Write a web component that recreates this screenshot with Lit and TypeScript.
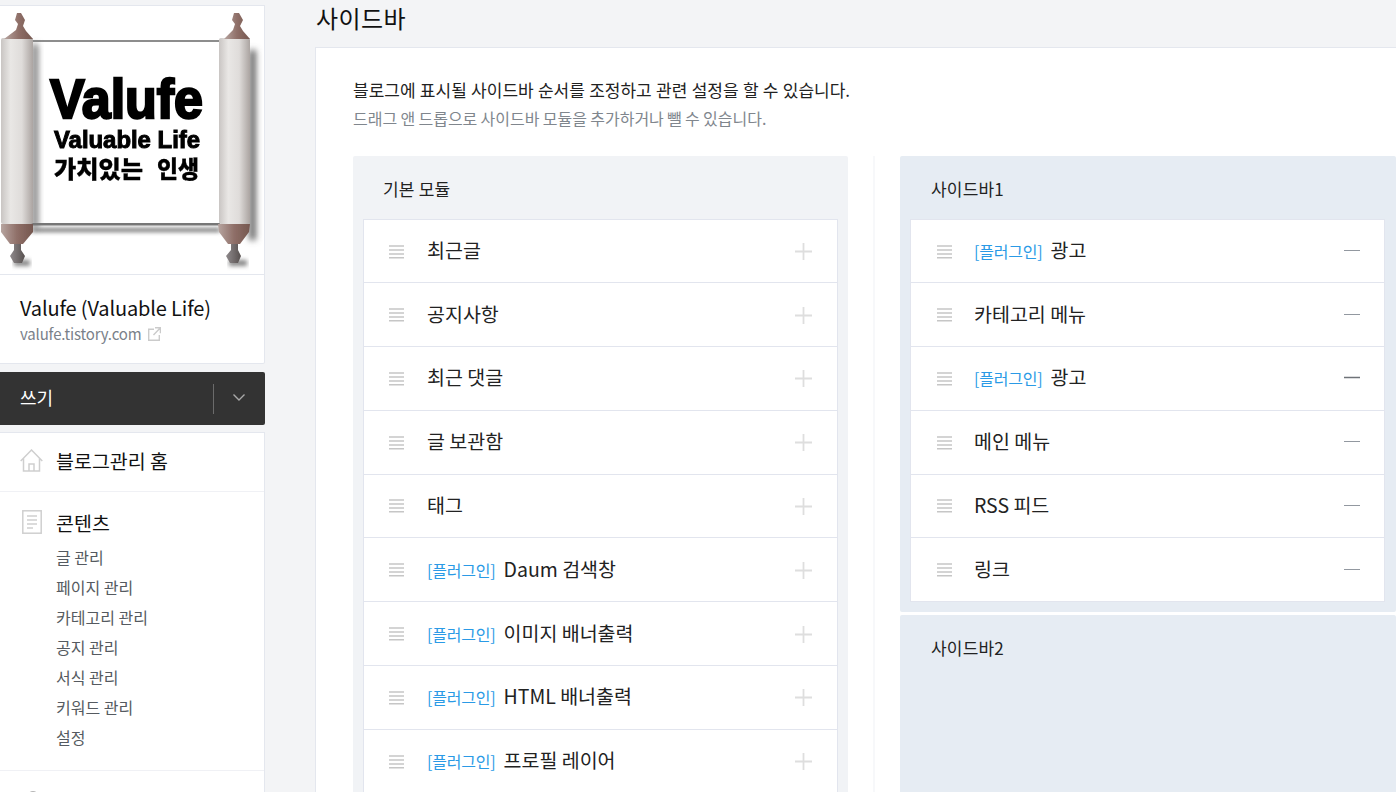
import { LitElement, html, css, svg, unsafeCSS } from "lit";
import { customElement } from "lit/decorators.js";

const FONT = unsafeCSS(`"Noto Sans CJK KR", "Noto Sans", sans-serif`);

const logo = svg`
<svg class="logo" viewBox="0 0 264 268" width="264" height="268">
  <defs>
    <linearGradient id="roll" x1="0" x2="1" y1="0" y2="0">
      <stop offset="0" stop-color="#c9c5c3"/>
      <stop offset="0.3" stop-color="#e9e7e5"/>
      <stop offset="0.65" stop-color="#dfdcda"/>
      <stop offset="1" stop-color="#aba4a1"/>
    </linearGradient>
    <linearGradient id="cap" x1="0" x2="1" y1="0" y2="0">
      <stop offset="0" stop-color="#b7a5a0"/>
      <stop offset="0.5" stop-color="#8f6f68"/>
      <stop offset="1" stop-color="#75574f"/>
    </linearGradient>
    <linearGradient id="knob" x1="0" x2="1" y1="0" y2="0">
      <stop offset="0" stop-color="#8f8a8c"/>
      <stop offset="1" stop-color="#57504f"/>
    </linearGradient>
    <filter id="blur" x="-100%" y="-10%" width="300%" height="120%"><feGaussianBlur stdDeviation="3"/></filter>
    <filter id="blurh" x="-10%" y="-300%" width="120%" height="700%"><feGaussianBlur stdDeviation="2"/></filter>
    <filter id="soft" x="-5%" y="-5%" width="110%" height="110%"><feGaussianBlur stdDeviation="0.5"/></filter>
  </defs>
  <rect x="34" y="35" width="186" height="183" fill="#fff"/>
  <rect x="32" y="34" width="188" height="2" fill="#8d8d8d" filter="url(#soft)"/>
  <rect x="32" y="222" width="188" height="4" fill="#777" filter="url(#blurh)"/>
  <rect x="30" y="217" width="190" height="2.5" fill="#777" filter="url(#soft)"/>
  <rect x="32" y="38" width="6" height="184" fill="#777" filter="url(#blur)"/>
  <rect x="249" y="44" width="7" height="190" fill="#666" filter="url(#blur)"/>
  <rect x="14" y="254" width="16" height="6" fill="#888" filter="url(#blurh)"/>
  <rect x="229" y="254" width="18" height="6" fill="#888" filter="url(#blurh)"/>
  <g filter="url(#soft)">
    <rect x="1" y="32" width="32" height="186" rx="2" fill="url(#roll)"/>
    <path d="M4 33 L16 24 L18 18 L15 14 L17 7 L21 7 L25 14 L23 20 L26 25 L33 33 Z" fill="url(#cap)"/>
    <path d="M1 218 H33 L33 226 L23 238 L10 238 L1 226 Z" fill="url(#cap)"/>
    <path d="M14 238 H21 L21 244 L25 250 L22 257 L14 257 L10 250 L14 244 Z" fill="url(#knob)"/>
    <rect x="219" y="32" width="31" height="186" rx="2" fill="url(#roll)"/>
    <path d="M224 33 L233 24 L235 18 L232 14 L234 7 L239 7 L243 14 L240 20 L243 25 L250 33 Z" fill="url(#cap)"/>
    <path d="M218 218 H250 L249 226 L240 238 L228 238 L219 226 Z" fill="url(#cap)"/>
    <path d="M231 238 H238 L238 244 L241 250 L238 257 L230 257 L226 250 L231 244 Z" fill="url(#knob)"/>
  </g>
  <g filter="url(#soft)">
    <text x="50" y="112" textLength="153" lengthAdjust="spacingAndGlyphs" class="l1">Valufe</text>
    <text x="54" y="142" textLength="146" lengthAdjust="spacingAndGlyphs" class="l2">Valuable Life</text>
    <text x="54" y="172" textLength="89" lengthAdjust="spacingAndGlyphs" class="l3">가치있는</text>
    <text x="157" y="172" textLength="42" lengthAdjust="spacingAndGlyphs" class="l3">인생</text>
  </g>
</svg>`;

const drag = html`<svg class="drag" width="15" height="14" viewBox="0 0 15 14"><path d="M0 1H15M0 5H15M0 9H15M0 12.8H15" stroke="#c6c6c6" stroke-width="1.5" fill="none"/></svg>`;
const plus = html`<svg class="act plus" width="17" height="17" viewBox="0 0 17 17"><path d="M0 8.5H17M8.5 0V17" stroke="#dedede" stroke-width="1.8" fill="none"/></svg>`;
const minus = (dark: boolean) => html`<svg class="act minus" width="16" height="3" viewBox="0 0 16 3"><path d="M0 1.5H16" stroke=${dark ? "#6f7378" : "#9298a0"} fill="none" stroke-width=${dark ? 1.5 : 1}/></svg>`;

@customElement("app-root")
export class AppRoot extends LitElement {
  static styles = css`
    :host { display: flex; width: 1396px; height: 792px; overflow: hidden; background: #f3f4f6; font-family: ${FONT}; color: #222; }
    .side { width: 265px; flex: none; padding-top: 5px; display: flex; flex-direction: column; }
    .card { background: #fff; border: 1px solid #e4e7ee; border-left: none; }
    .logoCard { height: 268px; border-bottom: none; flex: none; }
    .logo { display: block; }
    .l1 { font: 700 56px "Liberation Sans", sans-serif; stroke: #000; stroke-width: 2.4px; fill: #000; }
    .l2 { font: 700 24px "Liberation Sans", sans-serif; stroke: #000; stroke-width: 1px; fill: #000; }
    .l3 { font: 900 24px "Noto Sans CJK KR", sans-serif; fill: #000; stroke: #000; stroke-width: .3px; }
    .profile { height: 90px; flex: none; box-sizing: border-box; padding: 18px 20px 0; border-radius: 0 0 2px 0; }
    .name { font-size: 20px; line-height: 30px; color: #111; white-space: nowrap; letter-spacing: -0.15px; }
    .url { font-size: 15px; line-height: 22px; color: #7a8189; display: flex; align-items: center; gap: 7px; letter-spacing: -0.17px; }
    .write { margin-top: 8px; height: 53px; flex: none; background: #333; color: #fff; display: flex; align-items: center; padding: 0 2px 0 20px; border-radius: 0 2px 2px 0; font-size: 18px; }
    .write .lbl { flex: 1; margin-top: -4px; }
    .write .sep { width: 1px; height: 30px; background: #6b6b6b; }
    .write .chev { width: 49px; display: flex; justify-content: center; margin-top: -3px; }
    .nav { margin-top: 7px; flex: 1; }
    .home { height: 59px; display: flex; align-items: center; padding: 0 0 3px 20px; box-sizing: border-box; gap: 13px; border-bottom: 1px solid #f0f1f5; font-size: 19.5px; color: #111; }
    .sec { padding: 15px 0 18px 22px; border-bottom: 1px solid #f0f1f5; }
    .secHead { display: flex; align-items: center; gap: 14px; font-size: 19.5px; color: #111; height: 30px; }
    .sub { list-style: none; margin: 5px 0 0; padding: 0 0 0 34px; font-size: 16px; line-height: 30px; color: #555a60; }
    .next { padding: 20px 0 0 27px; }
    .next svg { display: block; }
    .main { flex: 1; min-width: 0; padding-left: 50px; display: flex; flex-direction: column; }
    h1 { margin: 0; font-weight: 400; font-size: 24px; line-height: 36px; height: 47px; flex: none; color: #111; letter-spacing: .4px; padding-left: 1px; }
    .panel { flex: 1; width: 1100px; box-sizing: border-box; background: #fff; border: 1px solid #e4e7ee; padding: 27px 37px 0; }
    .d1 { margin: 0; font-size: 17px; line-height: 30px; color: #222; word-spacing: .5px; }
    .d2 { margin: -1px 0 0; font-size: 16px; line-height: 28px; color: #80868d; word-spacing: -.3px; }
    .cols { display: flex; margin-top: 24px; }
    .col { width: 495px; flex: none; }
    .col.r { width: 496px; }
    .div { width: 52px; flex: none; display: flex; justify-content: center; }
    .div i { width: 2px; background: #f7f8fa; height: 700px; }
    .box { background: #f1f3f6; padding: 0 10px 10px; border-radius: 2px; }
    .r .box { background: #e6ecf3; }
    .r .box + .box { margin-top: 3px; height: 300px; }
    .boxT { font-size: 17px; height: 63px; line-height: 66px; padding-left: 20px; color: #222; letter-spacing: .2px; }
    .r .boxT { padding-left: 21px; }
    .list { background: #fff; border: 1px solid #e2e5ee; }
    .r .list { margin-right: 1px; }
    .row { height: 62.8px; box-sizing: content-box; display: flex; align-items: center; padding: 0 25px; border-top: 1px solid #e2e5ee; font-size: 19.5px; color: #222; }
    .r .row { padding-right: 24px; }
    .row:first-child { border-top: none; height: 62.2px; }
    .drag { flex: none; margin-right: 23px; margin-top: 1px; }
    .r .drag { margin-left: 1px; margin-right: 22px; }
    .plug { color: #2a9ae6; font-size: 16px; letter-spacing: -.2px; margin-right: 8px; }
    .t { flex: 1; white-space: nowrap; margin-top: -3px; }
    .act { flex: none; }
    .plus { margin-top: 1px; }
    .minus { margin-top: -1px; }
  `;

  private rows(items: [boolean, string][], right: boolean) {
    return html`<div class="list">${items.map(([p, t], i) => html`
      <div class="row">${drag}${p ? html`<span class="plug">[플러그인]</span>` : ""}<span class="t">${t}</span>${right ? minus(i === 2) : plus}</div>`)}</div>`;
  }

  render() {
    const left: [boolean, string][] = [[false, "최근글"], [false, "공지사항"], [false, "최근 댓글"], [false, "글 보관함"], [false, "태그"], [true, "Daum 검색창"], [true, "이미지 배너출력"], [true, "HTML 배너출력"], [true, "프로필 레이어"]];
    const right: [boolean, string][] = [[true, "광고"], [false, "카테고리 메뉴"], [true, "광고"], [false, "메인 메뉴"], [false, "RSS 피드"], [false, "링크"]];
    return html`
      <aside class="side">
        <div class="card logoCard">${logo}</div>
        <div class="card profile">
          <div class="name">Valufe (Valuable Life)</div>
          <div class="url">valufe.tistory.com
            <svg width="13" height="14" viewBox="0 0 13 14" fill="none" stroke="#cbcbcb" stroke-width="1.4"><path d="M6 2.2H.7V13.3H11.3V8M7 .8H12.4V6.2M12.4 .8L5.5 8"/></svg>
          </div>
        </div>
        <div class="write"><span class="lbl">쓰기</span><span class="sep"></span>
          <span class="chev"><svg width="12" height="7" viewBox="0 0 12 7" fill="none" stroke="#a9a9a9" stroke-width="1.4"><path d="M.5.5L6 6L11.5.5"/></svg></span>
        </div>
        <div class="card nav">
          <div class="home">
            <svg width="23" height="23" viewBox="0 0 23 23" fill="none" stroke="#cfcfcf" stroke-width="1.5"><path d="M.7 12L11.5 1L22.3 12M3.5 9.5V22H19.5V9.5M9 22V15H14V22"/></svg>
            블로그관리 홈
          </div>
          <div class="sec">
            <div class="secHead">
              <svg width="20" height="24" viewBox="0 0 20 24" fill="none" stroke="#cfcfcf" stroke-width="1.5"><rect x=".8" y=".8" width="18.4" height="22.4"/><path d="M5 6H15M5 10H15M5 14H15M5 18H11"/></svg>
              콘텐츠
            </div>
            <ul class="sub"><li>글 관리</li><li>페이지 관리</li><li>카테고리 관리</li><li>공지 관리</li><li>서식 관리</li><li>키워드 관리</li><li>설정</li></ul>
          </div>
          <div class="next"><svg width="12" height="12" viewBox="0 0 12 12" fill="none" stroke="#b5b5b5" stroke-width="1.5"><circle cx="6" cy="6" r="5.2"/></svg></div>
        </div>
      </aside>
      <main class="main">
        <h1>사이드바</h1>
        <section class="panel">
          <p class="d1">블로그에 표시될 사이드바 순서를 조정하고 관련 설정을 할 수 있습니다.</p>
          <p class="d2">드래그 앤 드롭으로 사이드바 모듈을 추가하거나 뺄 수 있습니다.</p>
          <div class="cols">
            <div class="col"><div class="box"><div class="boxT">기본 모듈</div>${this.rows(left, false)}</div></div>
            <div class="div"><i></i></div>
            <div class="col r">
              <div class="box"><div class="boxT">사이드바1</div>${this.rows(right, true)}</div>
              <div class="box"><div class="boxT">사이드바2</div></div>
            </div>
          </div>
        </section>
      </main>`;
  }
}
